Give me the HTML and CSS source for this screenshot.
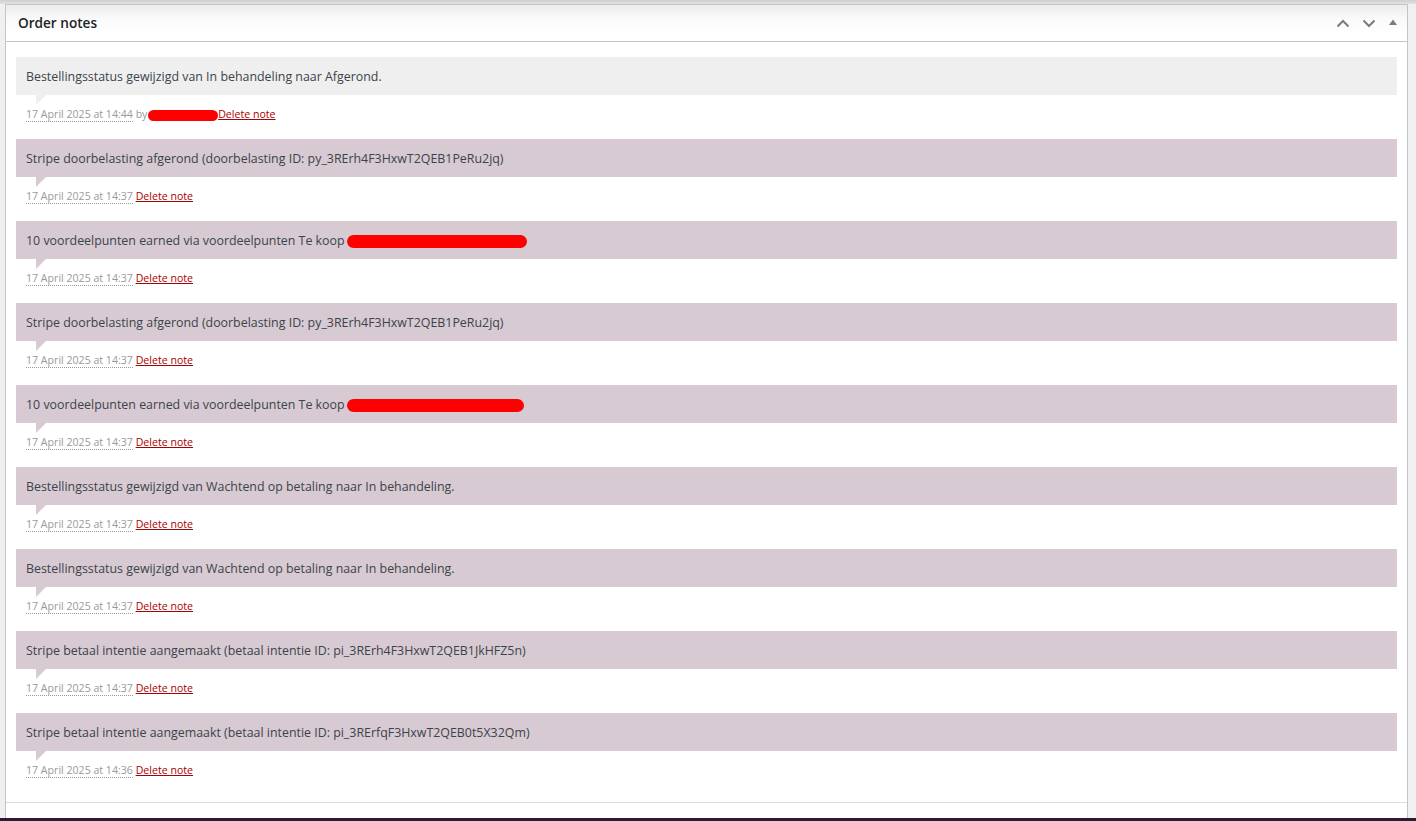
FILE: index.html
```html
<!DOCTYPE html>
<html lang="nl">
<head>
<meta charset="utf-8">
<title>Order notes</title>
<link rel="stylesheet" href="styles.css">
</head>
<body>
<div class="topshade"></div>
<div class="wrap">
  <div class="postbox">
    <div class="postbox-header">
      <h2 class="hndle">Order notes</h2>
      <div class="handle-actions">
        <button class="hbtn" aria-label="Move up">
          <svg width="14" height="9" viewBox="0 0 14 9"><path d="M1.5 7.5 L7 2 L12.5 7.5" fill="none" stroke="#787c82" stroke-width="2"/></svg>
        </button>
        <button class="hbtn down" aria-label="Move down">
          <svg width="14" height="9" viewBox="0 0 14 9"><path d="M1.5 1.5 L7 7 L12.5 1.5" fill="none" stroke="#787c82" stroke-width="2"/></svg>
        </button>
        <button class="hbtn small" aria-label="Toggle panel">
          <svg width="8" height="6" viewBox="0 0 8 6"><path d="M0 6 L4 0.5 L8 6 Z" fill="#787c82"/></svg>
        </button>
      </div>
    </div>
    <div class="inside">
      <ul class="order_notes">
        <li class="note">
          <div class="note_content"><p>Bestellingsstatus gewijzigd van In behandeling naar Afgerond.</p></div>
          <p class="meta"><abbr class="exact-date" title="17 April 2025 at 14:44">17 April 2025 at 14:44</abbr> by <span class="redact r1"></span><a href="#" class="delete_note">Delete note</a></p>
        </li>
        <li class="note system-note">
          <div class="note_content"><p>Stripe doorbelasting afgerond (doorbelasting ID: py_3RErh4F3HxwT2QEB1PeRu2jq)</p></div>
          <p class="meta"><abbr class="exact-date">17 April 2025 at 14:37</abbr> <a href="#" class="delete_note">Delete note</a></p>
        </li>
        <li class="note system-note">
          <div class="note_content"><p>10 voordeelpunten earned via voordeelpunten Te koop (<span class="redact r2"></span></p></div>
          <p class="meta"><abbr class="exact-date">17 April 2025 at 14:37</abbr> <a href="#" class="delete_note">Delete note</a></p>
        </li>
        <li class="note system-note">
          <div class="note_content"><p>Stripe doorbelasting afgerond (doorbelasting ID: py_3RErh4F3HxwT2QEB1PeRu2jq)</p></div>
          <p class="meta"><abbr class="exact-date">17 April 2025 at 14:37</abbr> <a href="#" class="delete_note">Delete note</a></p>
        </li>
        <li class="note system-note">
          <div class="note_content"><p>10 voordeelpunten earned via voordeelpunten Te koop (<span class="redact r3"></span></p></div>
          <p class="meta"><abbr class="exact-date">17 April 2025 at 14:37</abbr> <a href="#" class="delete_note">Delete note</a></p>
        </li>
        <li class="note system-note">
          <div class="note_content"><p>Bestellingsstatus gewijzigd van Wachtend op betaling naar In behandeling.</p></div>
          <p class="meta"><abbr class="exact-date">17 April 2025 at 14:37</abbr> <a href="#" class="delete_note">Delete note</a></p>
        </li>
        <li class="note system-note">
          <div class="note_content"><p>Bestellingsstatus gewijzigd van Wachtend op betaling naar In behandeling.</p></div>
          <p class="meta"><abbr class="exact-date">17 April 2025 at 14:37</abbr> <a href="#" class="delete_note">Delete note</a></p>
        </li>
        <li class="note system-note">
          <div class="note_content"><p>Stripe betaal intentie aangemaakt (betaal intentie ID: pi_3RErh4F3HxwT2QEB1JkHFZ5n)</p></div>
          <p class="meta"><abbr class="exact-date">17 April 2025 at 14:37</abbr> <a href="#" class="delete_note">Delete note</a></p>
        </li>
        <li class="note system-note">
          <div class="note_content"><p>Stripe betaal intentie aangemaakt (betaal intentie ID: pi_3RErfqF3HxwT2QEB0t5X32Qm)</p></div>
          <p class="meta"><abbr class="exact-date">17 April 2025 at 14:36</abbr> <a href="#" class="delete_note">Delete note</a></p>
        </li>
      </ul>
      <div class="add_note"></div>
    </div>
  </div>
</div>
<div class="bottombar"></div>
</body>
</html>
```

FILE: styles.css
```css
html, body {
  margin: 0;
  padding: 0;
}
body {
  background: #f0f0f1;
  font-family: "Segoe UI", "Open Sans", "Noto Sans", "Liberation Sans", sans-serif;
  font-size: 12.4px;
  line-height: 18px;
  color: #3c434a;
  overflow: hidden;
  height: 821px;
}
.topshade {
  height: 4px;
  background: linear-gradient(#cfcfcf, #e2e2e2);
}
.wrap {
  padding: 0 8px 0 5px;
}
.postbox {
  background: #fff;
  border: 1px solid #c3c4c7;
  border-bottom: 0;
  height: 814px;
  box-sizing: border-box;
}
.postbox-header {
  display: flex;
  align-items: center;
  justify-content: space-between;
  height: 36px;
  border-bottom: 1px solid #c3c4c7;
  background: linear-gradient(#ececec 0, #fafafa 14px, #fff 30px);
}
.hndle {
  margin: 0;
  padding: 0 12px;
  font-size: 13.6px;
  font-weight: 600;
  line-height: 1.4;
  color: #1d2327;
}
.handle-actions {
  display: flex;
  align-items: center;
  height: 100%;
  padding-right: 6px;
}
.hbtn {
  display: flex;
  align-items: center;
  justify-content: center;
  width: 26px;
  height: 36px;
  padding: 0;
  margin: 0;
  border: 0;
  background: transparent;
}
.hbtn.down {
  margin-right: 3px;
}
.hbtn.small {
  width: 16px;
  padding-bottom: 2px;
}
.inside {
  margin: 0;
  padding: 0;
}
.order_notes {
  list-style: none;
  margin: 13px 0;
  padding: 2px 0 0;
}
.note {
  padding: 0 10px;
  margin: 0 0 6px;
}
.note_content {
  position: relative;
  padding: 11px 10px 9px;
  background: #efefef;
}
.note_content::after {
  content: "";
  display: block;
  position: absolute;
  bottom: -10px;
  left: 20px;
  width: 0;
  height: 0;
  border-width: 10px 10px 0 0;
  border-style: solid;
  border-color: #efefef transparent;
}
.system-note .note_content {
  background: #d7cad2;
}
.system-note .note_content::after {
  border-color: #d7cad2 transparent;
}
.note_content p {
  margin: 0;
  padding: 0;
  word-wrap: break-word;
}
.meta {
  margin: 0;
  padding: 10px;
  font-size: 10.6px;
  color: #999;
}
.exact-date {
  text-decoration: none;
  border-bottom: 1px dotted #999;
}
.delete_note {
  color: #a00;
  text-decoration: underline;
}
.redact {
  display: inline-block;
  background: #ff0000;
  border-radius: 7px;
  vertical-align: middle;
}
.r1 {
  width: 70px;
  height: 11px;
  border-radius: 6px;
  margin-left: -2px;
}
.r2 {
  width: 180px;
  height: 13px;
  margin-left: -4px;
}
.r3 {
  width: 177px;
  height: 13px;
  margin-left: -4px;
}
.add_note {
  border-top: 1px solid #dcdcde;
}
.bottombar {
  height: 3px;
  background: #2c1a36;
}
```
